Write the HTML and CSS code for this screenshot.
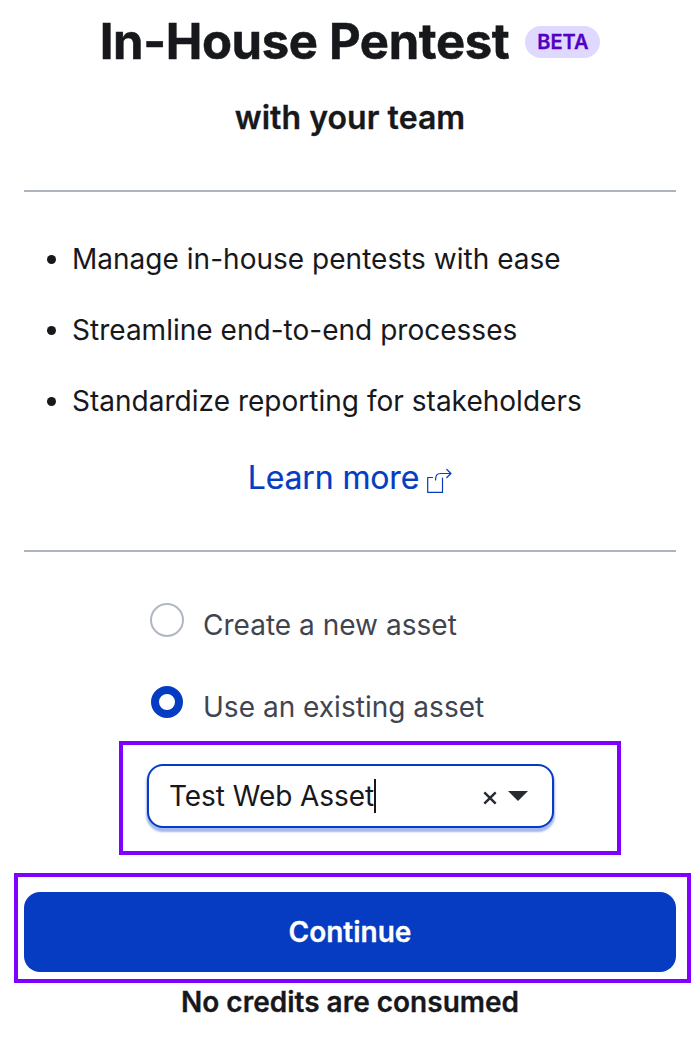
FILE: index.html
```html
<!DOCTYPE html>
<html lang="en">
<head>
<meta charset="utf-8">
<title>In-House Pentest</title>
<link rel="stylesheet" href="styles.css">
</head>
<body>
<main class="card">
  <header class="head">
    <h1 class="title"><span class="title-text">In-House Pentest</span><span class="badge">BETA</span></h1>
    <p class="subtitle"><span>with your team</span></p>
  </header>
  <section class="details">
    <ul class="features">
      <li><span>Manage in-house pentests with ease</span></li>
      <li><span>Streamline end-to-end processes</span></li>
      <li><span>Standardize reporting for stakeholders</span></li>
    </ul>
    <a class="learn" href="#"><span>Learn more</span>
      <svg class="ext" width="25" height="26" viewBox="0 0 25 26" fill="none" stroke="currentColor" stroke-width="1.2" stroke-linecap="round" stroke-linejoin="round"><path d="M5.6 9.5H.7V24.4H15.5V10.2M8.6 12V11C8.6 7.6 10.4 5.5 13.6 5.5H24M19.8 1.5L24 5.5L19.8 9.5"/></svg>
    </a>
  </section>
  <section class="assets">
    <label class="option"><i class="radio"></i><span>Create a new asset</span></label>
    <label class="option"><i class="radio checked"></i><span>Use an existing asset</span></label>
  </section>
  <div class="frame frame-select">
    <div class="select">
      <span class="value">Test Web Asset</span><i class="caret"></i>
      <svg class="clear" width="14" height="14" viewBox="0 0 14 14" fill="none" stroke="currentColor" stroke-width="2.5"><path d="M1.3 1.3L12.7 12.7M12.7 1.3L1.3 12.7"/></svg>
      <svg class="arrow" width="20" height="10" viewBox="0 0 20 10" fill="currentColor"><path d="M0 0H20L10 10Z"/></svg>
    </div>
  </div>
  <div class="frame frame-button"><button class="continue">Continue</button></div>
  <p class="note"><span>No credits are consumed</span></p>
</main>
</body>
</html>
```
FILE: styles.css
```css
* { box-sizing: border-box; }
body { margin: 0; background: #fff; color: #17181c; font-family: Inter, sans-serif; font-size: 28px; }
h1, p, ul { margin: 0; padding: 0; }
.card { width: 700px; height: 1040px; overflow: hidden; }
.head { height: 192px; margin: 0 24px; border-bottom: 2px solid #adb3bf; }
.title { display: flex; align-items: center; justify-content: center; gap: 16px; height: 83px; font-size: 49px; font-weight: 700; letter-spacing: -0.37px; white-space: nowrap; }
.title-text { -webkit-text-stroke: 0.5px currentColor; }
.badge { width: 75px; height: 32px; border-radius: 16px; background: #dfd9ff; color: #5200c2; font-size: 20px; font-weight: 600; letter-spacing: 0; line-height: 32px; text-align: center; -webkit-text-stroke: 0.3px currentColor; }
.subtitle { margin-top: 15px; font-size: 32px; font-weight: 600; line-height: 40px; letter-spacing: 0.05px; text-align: center; -webkit-text-stroke: 0.3px currentColor; }
.details { height: 360px; margin: 0 24px; padding-top: 47px; border-bottom: 2px solid #adb3bf; }
.features { display: flex; flex-direction: column; gap: 31px; list-style: none; padding-left: 23px; }
.features li { display: flex; align-items: center; gap: 16px; height: 40px; letter-spacing: 0.02px; white-space: nowrap; }
.features li::before { content: ""; width: 9px; height: 9px; border-radius: 50%; background: currentColor; }
.learn { display: flex; justify-content: center; align-items: center; gap: 8px; height: 40px; margin-top: 36px; color: #053cc2; font-size: 32px; letter-spacing: -0.13px; text-decoration: none; -webkit-text-stroke: 0.2px currentColor; }
.ext { margin-top: 8px; }
.assets { height: 189px; padding: 51px 0 0 150px; color: #3f4550; }
.option { display: flex; gap: 19px; height: 82px; }
.option span { line-height: 44px; letter-spacing: 0.02px; white-space: nowrap; }
.radio { width: 34px; height: 34px; border: 2px solid #b1b7c2; border-radius: 50%; }
.radio.checked { width: 32px; height: 32px; margin: 1px; border: 8px solid #053cc2; }
.frame { border: 4px solid #8000ff; }
.frame-select { width: 502px; height: 114px; margin-left: 119px; padding: 19px 24px; }
.select { display: flex; align-items: center; width: 407px; height: 64px; padding: 0 24px 0 20px; border: 2px solid #053cc2; border-radius: 16px; box-shadow: 0 3px 2px 1px #a6b7f1; background: #fff; white-space: nowrap; }
.value { letter-spacing: -0.05px; }
.caret { width: 2px; height: 34px; background: #17181c; }
.clear { margin: 4px 0 0 auto; color: #272b33; }
.arrow { margin-left: 11px; color: #272b33; }
.frame-button { width: 677px; height: 110px; margin: 18px 0 0 14px; padding: 15px 6px; }
.continue { display: block; width: 652px; height: 80px; padding: 0; border: 0; border-radius: 16px; background: #053cc2; color: #fff; font: 600 28px Inter, sans-serif; -webkit-text-stroke: 0.3px currentColor; }
.note { font-weight: 600; line-height: 38px; text-align: center; -webkit-text-stroke: 0.3px currentColor; }
```
